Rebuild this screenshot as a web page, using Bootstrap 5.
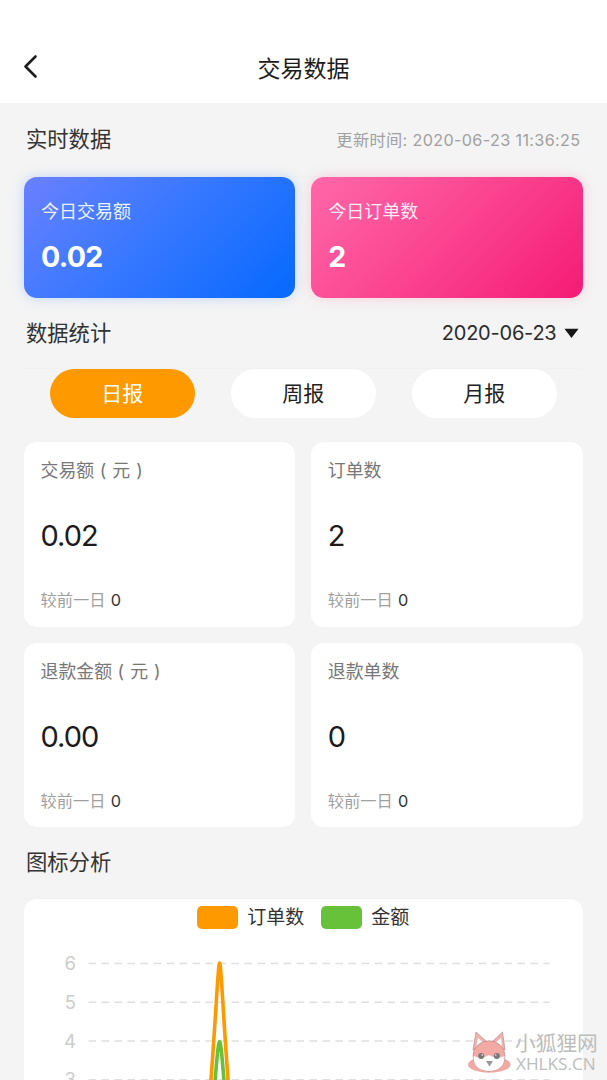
<!DOCTYPE html>
<html lang="zh-CN">
<head>
<meta charset="utf-8">
<meta name="viewport" content="width=device-width, initial-scale=1">
<title>交易数据</title>
<link href="https://cdn.jsdelivr.net/npm/bootstrap@5.3.0/dist/css/bootstrap.min.css" rel="stylesheet">
<style>
body{font-family:Inter,"Noto Sans CJK SC",sans-serif;background:#f4f4f4;color:#333;height:1080px;overflow:hidden;position:relative}
.topbar{height:103px;padding:35px 24px 0}
.topbar h1{font-size:23px;line-height:34px;font-weight:400;color:#1c1c1c}
.back-btn{left:21px;top:52px;line-height:0}
.page-body{padding:0 24.5px 0 24px}
.section-head{padding:0 2px;border-bottom:1px solid #f1f1f1}
.section-head h2{font-size:21.3px;line-height:30px;font-weight:400;color:#333}
.lift{padding-bottom:2px}
.updated{font-size:16.2px;line-height:24px;color:#a0a0a0;letter-spacing:.35px}
.picker{font-size:20px;line-height:28px;color:#2b2b2b;gap:7px;letter-spacing:-.22px;margin-right:2px}
.pair{display:grid;grid-template-columns:1fr 1fr;gap:16px}
.today{height:121px;border-radius:13px;padding:21px 17px;color:#fff}
.today-blue{background:linear-gradient(135deg,#6a80ff 0%,#3c79ff 42%,#0569ff 100%);box-shadow:0 0 14px rgba(5,105,255,.2)}
.today-pink{background:linear-gradient(135deg,#ff68a8 0%,#fb4390 50%,#f51b75 100%);box-shadow:0 0 14px rgba(255,60,130,.2)}
.today .cap{font-size:18px;line-height:28px;opacity:.9}
.today .num{font-size:28.6px;line-height:36px;font-weight:700;margin-top:13px;letter-spacing:-.7px}
.tabs{gap:36.5px;height:49px;margin-bottom:24px}
.tabs .btn{width:144.5px;height:49px;padding:0;border:0;font-size:21px;line-height:50px;background:#fff;color:#222}
.tabs .btn.active{background:#ff9900;color:#fff}
.stat{height:184.5px;border-radius:13px;background:#fff;padding:16px 16.5px}
.stat .cap{font-size:17.9px;line-height:26px;color:#777;white-space:nowrap}
.paren{letter-spacing:.5px}
.stat .num{font-size:29px;line-height:36px;color:#1c1c1c;margin-top:34px;letter-spacing:-1px}
.stat .diff{font-size:16.3px;line-height:24px;color:#a0a0a0;margin-top:34px}
.stat .diff span{color:#333;margin-left:5px}
.chart{height:220px;border-radius:13px 13px 0 0;background:#fff}
.legend{padding-top:5px;gap:17px;font-size:19px;line-height:28px;color:#333}
.swatch{width:41px;height:23px;border-radius:5px;margin:-2px 9px 0 0}
.chart svg{margin-top:-33px}
.watermark{left:467px;top:1029px;gap:4px;color:#bdbdbd}
.wm-cn{font:20.7px/26px "Noto Sans CJK SC",sans-serif}
.wm-en{font:17.2px/17px "Open Sans",sans-serif;margin-left:1px}
</style>
</head>
<body>
<header class="topbar bg-white text-center d-flex flex-column justify-content-center">
  <a class="back-btn position-absolute" href="#" aria-label="返回"><svg width="20" height="28" viewBox="0 0 20 28"><path d="M14.5 4.5 4.5 14.5 14.5 24.5" fill="none" stroke="#1c1c1c" stroke-width="2.6" stroke-linecap="round" stroke-linejoin="round"/></svg></a>
  <h1 class="m-0">交易数据</h1>
</header>
<main class="page-body">
  <div class="section-head d-flex justify-content-between align-items-center" style="height:74px">
    <h2 class="m-0 lift">实时数据</h2><span class="updated">更新时间: 2020-06-23 11:36:25</span>
  </div>
  <div class="pair">
    <div class="today today-blue"><div class="cap">今日交易额</div><div class="num">0.02</div></div>
    <div class="today today-pink"><div class="cap">今日订单数</div><div class="num">2</div></div>
  </div>
  <div class="section-head d-flex justify-content-between align-items-center" style="height:71px">
    <h2 class="m-0">数据统计</h2>
    <span class="picker d-flex align-items-center"><span>2020-06-23</span><svg width="15" height="11" viewBox="0 0 15 11"><path d="M.5 .8h14L7.5 10z" fill="#161616"/></svg></span>
  </div>
  <div class="tabs d-flex justify-content-center">
    <button class="btn rounded-pill active">日报</button><button class="btn rounded-pill">周报</button><button class="btn rounded-pill">月报</button>
  </div>
  <div class="pair">
    <div class="stat"><div class="cap">交易额<span class="paren"> ( 元 )</span></div><div class="num">0.02</div><div class="diff">较前一日<span>0</span></div></div>
    <div class="stat"><div class="cap">订单数</div><div class="num">2</div><div class="diff">较前一日<span>0</span></div></div>
    <div class="stat"><div class="cap">退款金额<span class="paren"> ( 元 )</span></div><div class="num">0.00</div><div class="diff">较前一日<span>0</span></div></div>
    <div class="stat"><div class="cap">退款单数</div><div class="num">0</div><div class="diff">较前一日<span>0</span></div></div>
  </div>
  <div class="section-head d-flex align-items-center" style="height:72px"><h2 class="m-0 lift">图标分析</h2></div>
  <div class="chart">
    <div class="legend d-flex justify-content-center">
      <span class="d-flex align-items-center"><i class="swatch" style="background:#ff9900"></i>订单数</span>
      <span class="d-flex align-items-center"><i class="swatch" style="background:#67c23a"></i>金额</span>
    </div>
    <svg class="d-block" width="558" height="220" viewBox="0 0 558 220">
      <g stroke="#dfdfdf" stroke-width="1.5" stroke-dasharray="7.5 5.5"><path d="M64.5 64.5H525.5M64.5 103.3H525.5M64.5 142H525.5M64.5 180.8H525.5"/></g>
      <g font-family="Inter,sans-serif" font-size="18.5" fill="#ccc" text-anchor="end"><text x="52" y="70.5">6</text><text x="52" y="109.5">5</text><text x="52" y="148.5">4</text><text x="52" y="187">3</text></g>
      <g fill="none" stroke-width="3.6" stroke-linejoin="round">
        <path stroke="#ff9900" d="M184 220C192 120 194 64 195.6 64S199 120 207 220"/>
        <path stroke="#67c23a" d="M188 220C192 170 194 142.5 195.6 142.5S199 170 203 220"/>
      </g>
    </svg>
  </div>
</main>
<div class="watermark position-absolute d-flex align-items-start">
  <svg width="44" height="47" viewBox="0 0 44 47">
    <ellipse cx="22.3" cy="35.5" rx="21.3" ry="8.2" fill="#f0aaa5"/>
    <g stroke="#b78d8b" stroke-width=".7"><path d="M6 21 9 3 20 13zM38 21 35.5 3 25 13z" fill="#f3b1ac"/><path d="M9 19 11 9 17 14zM35 19 34 9 28 14z" fill="#fff" stroke="none"/>
    <ellipse cx="22" cy="27" rx="16" ry="15.2" fill="#f3aaa5"/></g>
    <path d="M6.6 27Q14 31 22 26Q30 31 37.4 27C38 37 31 42 22 42S6 37 6.6 27" fill="#fff"/>
    <g fill="#777"><circle cx="14.2" cy="27" r="3"/><circle cx="29.8" cy="27" r="3"/></g><g fill="#fff"><circle cx="15.2" cy="26" r=".8"/><circle cx="28.8" cy="26" r=".8"/></g>
    <path d="M19 32h7l-3.5 5.5z" fill="#999"/>
  </svg>
  <div><div class="wm-cn">小狐狸网</div><div class="wm-en">XHLKS.CN</div></div>
</div>
<script src="https://cdn.jsdelivr.net/npm/bootstrap@5.3.0/dist/js/bootstrap.bundle.min.js"></script>
</body>
</html>
